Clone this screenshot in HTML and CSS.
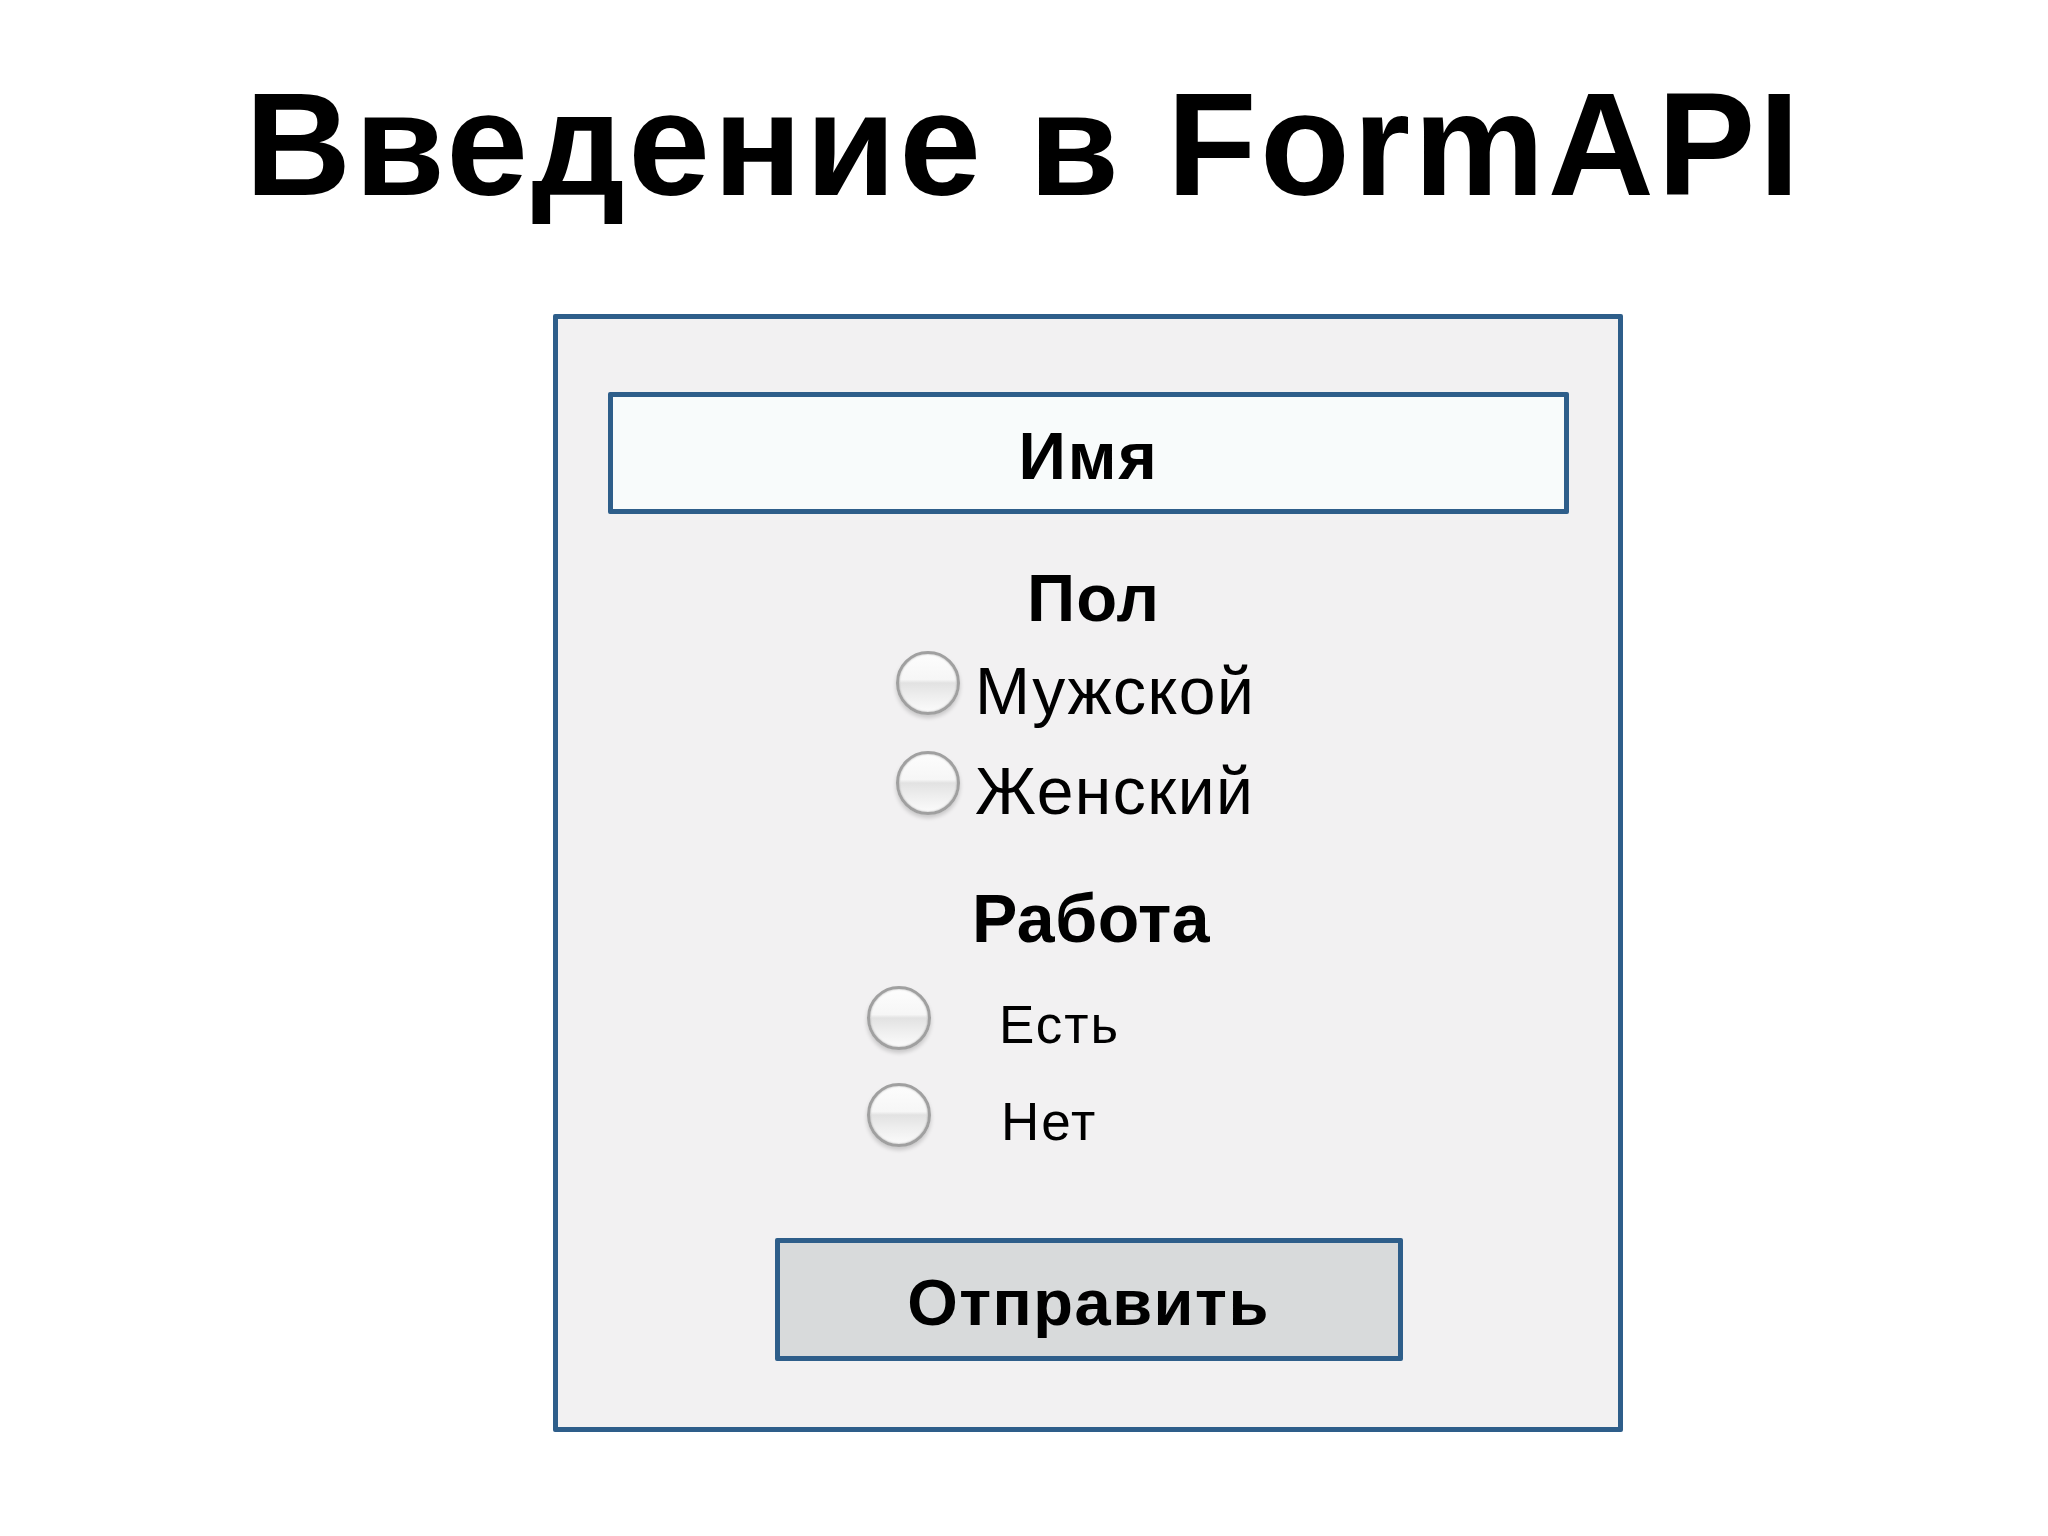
FILE: index.html
```html
<!DOCTYPE html>
<html lang="ru">
<head>
<meta charset="utf-8">
<title>Введение в FormAPI</title>
<link rel="stylesheet" href="styles.css">
</head>
<body>
<h1 class="title">Введение в FormAPI</h1>
<div class="form-box">
  <div class="field">Имя</div>
  <div class="label label-gender">Пол</div>
  <div class="group group-gender">
    <div class="row"><span class="radio"></span><span class="opt">Мужской</span></div>
    <div class="row"><span class="radio"></span><span class="opt">Женский</span></div>
  </div>
  <div class="label label-work">Работа</div>
  <div class="group group-work">
    <div class="row"><span class="radio"></span><span class="opt opt-small">Есть</span></div>
    <div class="row"><span class="radio"></span><span class="opt opt-small opt-no">Нет</span></div>
  </div>
  <div class="button">Отправить</div>
</div>
</body>
</html>
```

FILE: styles.css
```css
html, body {
  margin: 0;
  padding: 0;
  background: #ffffff;
}

body {
  width: 2048px;
  height: 1536px;
  font-family: "Liberation Sans", Arial, sans-serif;
  color: #000;
  overflow: hidden;
}

.title {
  margin: 71px 0 0 0;
  font-size: 147px;
  line-height: 147px;
  font-weight: bold;
  letter-spacing: 3.4px;
  text-align: center;
}

.form-box {
  box-sizing: border-box;
  margin: 96px 0 0 553px;
  width: 1070px;
  height: 1118px;
  border: 5px solid #2e5e8a;
  border-radius: 2px;
  background: #f2f1f2;
  padding: 73px 49px 0 50px;
  display: flex;
  flex-direction: column;
  align-items: center;
}

.field {
  box-sizing: border-box;
  width: 961px;
  height: 122px;
  border: 5px solid #2e5e8a;
  border-radius: 2px;
  background: #f8fbfb;
  display: flex;
  align-items: center;
  justify-content: center;
  padding-top: 6px;
  font-size: 66px;
  line-height: 66px;
  font-weight: bold;
  letter-spacing: 1.7px;
}

.label {
  font-weight: bold;
  line-height: 1;
}

.label-gender {
  margin-top: 50px;
  margin-left: 10px;
  font-size: 67px;
  letter-spacing: 1px;
}

.label-work {
  margin-top: 43px;
  margin-left: 5px;
  font-size: 68px;
  letter-spacing: 0.5px;
}

.group {
  align-self: flex-start;
  display: flex;
  flex-direction: column;
}

.group-gender {
  margin-left: 288px;
}

.group-work {
  margin-left: 259px;
  margin-top: 34px;
  gap: 26px;
}

.row {
  display: flex;
  align-items: flex-start;
}

.group-gender .row {
  height: 100px;
}

.group-gender .row:first-child {
  margin-top: 10px;
}

.radio {
  box-sizing: border-box;
  flex: none;
  width: 64px;
  height: 64px;
  border-radius: 50%;
  border: 3px solid #a0a0a0;
  background: linear-gradient(#fdfdfd 0%, #f6f6f6 44%, #e2e2e2 50%, #ededed 70%, #fbfbfb 100%);
  box-shadow: 0 3px 4px rgba(0, 0, 0, 0.18), inset 0 0 2px rgba(0, 0, 0, 0.3);
}

.group-gender .radio {
  margin-top: 10px;
}

.opt {
  font-size: 66px;
  line-height: 100px;
  margin-left: 15px;
  letter-spacing: 1.5px;
}

.opt-small {
  font-size: 53px;
  line-height: 64px;
  margin-top: 7px;
  margin-left: 68px;
  letter-spacing: 2px;
}

.opt-no {
  margin-left: 70px;
}

.button {
  box-sizing: border-box;
  margin-top: 84px;
  width: 628px;
  height: 123px;
  border: 5px solid #2e5e8a;
  border-radius: 2px;
  background: #d8dadb;
  display: flex;
  align-items: center;
  justify-content: center;
  padding-top: 6px;
  font-size: 65px;
  line-height: 65px;
  font-weight: bold;
  letter-spacing: 1.5px;
}
```
